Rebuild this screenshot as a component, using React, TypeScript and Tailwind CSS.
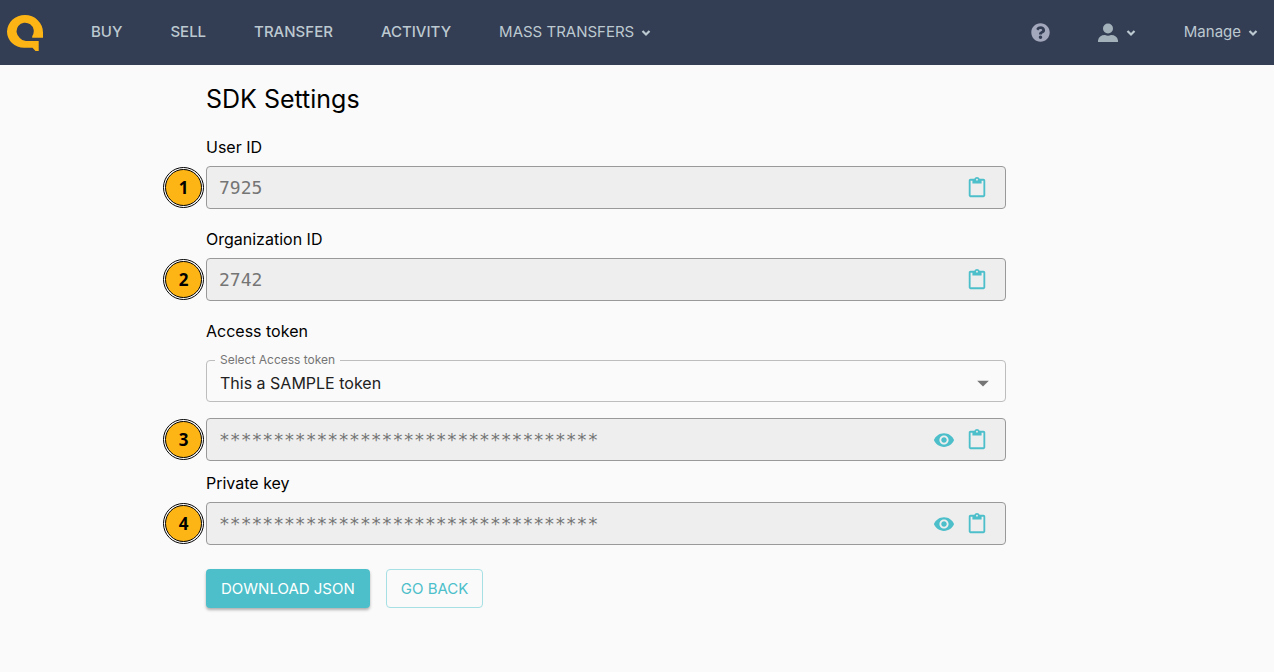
import { useState } from "react";
import type { ReactNode } from "react";
import { MdContentPaste, MdVisibility, MdArrowDropDown } from "react-icons/md";
import { FaQuestionCircle } from "react-icons/fa";

const MASK = "***********************************";

function Logo() {
  return (
    <svg viewBox="0 0 36 36" className="size-9 text-[#fdb515]" fill="currentColor" aria-hidden="true">
      <path d="M18 0A18 17.500 0 0 1 36 17.500V22.700H25.200V21.200A8.600 8.600 0 1 0 12.800 23Q15 25.800 19 26H31.700V36H28.500L25.500 32.800H17A17 16.200 0 0 1 0 16.600A18 16.800 0 0 1 18 0Z" />
    </svg>
  );
}

function Chevron() {
  return (
    <svg viewBox="0 0 10 8" className="h-2 w-2.5" fill="none" stroke="currentColor" strokeWidth="2.200" aria-hidden="true">
      <path d="M1.500 2L5 5.500L8.500 2" />
    </svg>
  );
}

function UserIcon() {
  return (
    <svg viewBox="0 0 20 20" className="size-5" fill="currentColor" aria-hidden="true">
      <circle cx="10" cy="5.500" r="5" />
      <path d="M0 19V17.500Q1 12 7 12Q10 13.500 13 12Q19 12 20 17.500V19Z" />
    </svg>
  );
}

function Badge({ children }: { children: ReactNode }) {
  return (
    <span className="absolute top-0 -left-11 grid size-[41px] place-items-center rounded-full border border-black bg-white p-px">
      <span className="grid size-full place-items-center rounded-full border border-black bg-[#fdb515] font-['Open_Sans','Noto_Sans',sans-serif] text-[17px] font-bold text-black">
        {children}
      </span>
    </span>
  );
}

interface FieldProps {
  id: string;
  label: string;
  value: string;
  badge: string;
  secret?: boolean;
}

function Field({ id, label, value, badge, secret }: FieldProps) {
  const [visible, setVisible] = useState(false);
  return (
    <div className="relative flex h-[43px] items-center rounded border border-[#999] bg-[#eee] pr-[17px] pl-3">
      <Badge>{badge}</Badge>
      <input
        id={id}
        aria-label={label}
        readOnly
        value={value}
        className="min-w-0 flex-1 bg-transparent font-['DejaVu_Sans_Mono',monospace] text-lg text-[#757575] outline-none"
      />
      <div className="flex items-center gap-[11px] text-[#4dbfca]">
        {secret && (
          <button type="button" aria-label={`Show ${label}`} aria-pressed={visible} onClick={() => setVisible(!visible)}>
            <MdVisibility className="size-[22px]" />
          </button>
        )}
        <button type="button" aria-label={`Copy ${label}`}>
          <MdContentPaste className="size-[22px]" />
        </button>
      </div>
    </div>
  );
}

const links = ["BUY", "SELL", "TRANSFER", "ACTIVITY"];

export default function App() {
  return (
    <div className="min-h-screen bg-[#fafafa] font-[Inter,sans-serif] text-black">
      <header className="flex h-[65px] items-center justify-between bg-[#333d54] pr-4 pl-[7px] text-[15px] text-[#bdc9d0]">
        <nav className="flex items-center gap-12">
          <a href="#home" aria-label="Home">
            <Logo />
          </a>
          {links.map((link) => (
            <a key={link} href={`#${link.toLowerCase()}`} className="font-medium">
              {link}
            </a>
          ))}
          <button type="button" className="flex items-center gap-[7px]">
            MASS TRANSFERS <Chevron />
          </button>
        </nav>
        <div className="flex items-center gap-12">
          <button type="button" aria-label="Help" className="text-[#a3a8bd]">
            <FaQuestionCircle className="size-[19px]" />
          </button>
          <button type="button" aria-label="Account" className="flex items-center gap-2 text-[#a3b1ba]">
            <UserIcon />
            <span className="text-[#bdc9d0]">
              <Chevron />
            </span>
          </button>
          <button type="button" className="flex items-center gap-[7px]">
            Manage <Chevron />
          </button>
        </div>
      </header>

      <main className="max-w-[1006px] pt-[14px] pl-[206px] text-base leading-6">
        <h1 className="mb-4 text-[25px] leading-10">SDK Settings</h1>

        <label htmlFor="user" className="mb-[7px] block">User ID</label>
        <Field id="user" label="User ID" value="7925" badge="1" />

        <label htmlFor="org" className="mt-[18px] mb-[7px] block">Organization ID</label>
        <Field id="org" label="Organization ID" value="2742" badge="2" />

        <h2 className="mt-[18px] mb-2">Access token</h2>
        <fieldset className="relative mb-4 flex h-[51px] rounded border border-[#bdbdbd] px-2">
          <legend className="px-[5px] text-xs leading-[18px] text-[#757575]">
            <label htmlFor="token">Select Access token</label>
          </legend>
          <select id="token" className="h-7 w-full appearance-none bg-transparent pl-[5px] text-[#212121] outline-none">
            <option>This a SAMPLE token</option>
          </select>
          <MdArrowDropDown className="pointer-events-none absolute right-2 size-7 text-[#757575]" />
        </fieldset>
        <Field id="token-value" label="Access token value" value={MASK} badge="3" secret />

        <label htmlFor="key" className="mt-2.5 mb-[7px] block">Private key</label>
        <Field id="key" label="Private key" value={MASK} badge="4" secret />

        <div className="mt-6 flex gap-4 text-[15px]">
          <button type="button" className="h-[39px] rounded bg-[#4dbfca] px-[15px] text-white shadow-[0_2px_3px_rgba(0,0,0,0.3)]">
            DOWNLOAD JSON
          </button>
          <button type="button" className="h-[39px] rounded border border-[#a6dfe4] px-[14px] text-[#4dbfca]">
            GO BACK
          </button>
        </div>
      </main>
    </div>
  );
}
